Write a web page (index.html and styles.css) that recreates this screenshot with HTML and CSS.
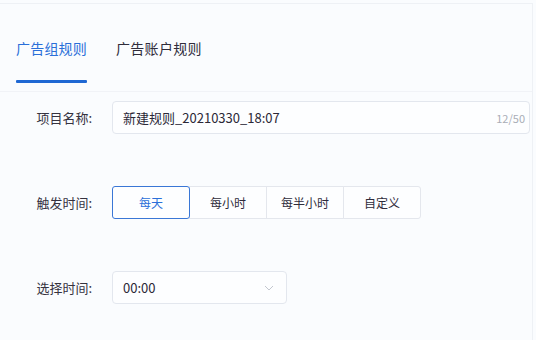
FILE: index.html
```html
<!DOCTYPE html>
<html lang="zh">
<head>
<meta charset="utf-8">
<link rel="stylesheet" href="styles.css">
</head>
<body>
<div class="panel">
  <div class="tabs">
    <div class="tab active">广告组规则</div>
    <div class="tab">广告账户规则</div>
  </div>
  <div class="form">
    <div class="row row-name">
      <div class="label">项目名称:</div>
      <div class="input">
        <span class="value">新建规则_20210330_18:07</span>
        <span class="count">12/50</span>
      </div>
    </div>
    <div class="row row-trigger">
      <div class="label">触发时间:</div>
      <div class="seg">
        <div class="seg-btn active">每天</div>
        <div class="seg-btn">每小时</div>
        <div class="seg-btn">每半小时</div>
        <div class="seg-btn">自定义</div>
      </div>
    </div>
    <div class="row row-time">
      <div class="label">选择时间:</div>
      <div class="select">
        <span class="value">00:00</span>
        <svg class="chev" width="10" height="6" viewBox="0 0 10 6"><path d="M1 1l4 4 4-4" fill="none" stroke="#c3c7cf" stroke-width="1"/></svg>
      </div>
    </div>
  </div>
</div>
</body>
</html>
```
FILE: styles.css
```css
html, body {
  margin: 0;
  padding: 0;
  background: #fafcfe;
}
body {
  width: 536px;
  height: 340px;
  overflow: hidden;
  font-family: "Noto Sans CJK SC", "Noto Sans", sans-serif;
  color: #2f2c3b;
}
.panel {
  margin-top: 3px;
  width: 533px;
  height: 337px;
  border-top: 1px solid #eef1f5;
  border-right: 1px solid #eef1f5;
  box-sizing: border-box;
}
.tabs {
  display: flex;
  gap: 29px;
  padding-left: 16px;
  padding-top: 34px;
  height: 88px;
  box-sizing: border-box;
  border-bottom: 1px solid #f1f3f7;
}
.tab {
  font-size: 14px;
  line-height: 20px;
  height: 20px;
  letter-spacing: 0.3px;
}
.tab.active {
  color: #2a6fd9;
  position: relative;
  letter-spacing: 0.2px;
}
.tab.active::after {
  content: "";
  position: absolute;
  left: 0;
  right: 0;
  top: 42px;
  height: 3px;
  background: #1f68d3;
  border-radius: 1px;
}
.form {
  display: flex;
  flex-direction: column;
  padding-top: 9px;
}
.row {
  display: flex;
  align-items: center;
  height: 33px;
}
.row-trigger { margin-top: 52px; }
.row-time { margin-top: 52px; }
.label {
  width: 92px;
  text-align: right;
  font-size: 13px;
  margin-right: 20px;
  color: #35323f;
}
.input {
  width: 418px;
  height: 33px;
  box-sizing: border-box;
  border: 1px solid #e3e7ee;
  border-radius: 4px;
  background: #fdfeff;
  display: flex;
  align-items: center;
  justify-content: space-between;
  padding: 0 4px 0 10px;
}
.input .value {
  font-size: 13px;
  color: #2b2837;
}
.count {
  font-size: 11px;
  color: #a9adb6;
}
.seg {
  display: flex;
}
.seg-btn {
  width: 78px;
  height: 33px;
  box-sizing: border-box;
  border: 1px solid #e4e7ed;
  margin-left: -1px;
  display: flex;
  align-items: center;
  justify-content: center;
  font-size: 12px;
  background: #fdfeff;
  color: #2f2c3b;
}
.seg-btn:first-child {
  margin-left: 0;
  border-radius: 3px 0 0 3px;
}
.seg-btn:last-child {
  border-radius: 0 3px 3px 0;
}
.seg-btn.active {
  border-color: #3a77d6;
  color: #2a6fd9;
  position: relative;
  z-index: 1;
  border-radius: 3px;
}
.select {
  width: 175px;
  height: 33px;
  box-sizing: border-box;
  border: 1px solid #e3e7ee;
  border-radius: 4px;
  background: #fdfeff;
  display: flex;
  align-items: center;
  justify-content: space-between;
  padding: 0 12px 0 10px;
}
.select .value {
  font-size: 13px;
  color: #2b2837;
}
```
